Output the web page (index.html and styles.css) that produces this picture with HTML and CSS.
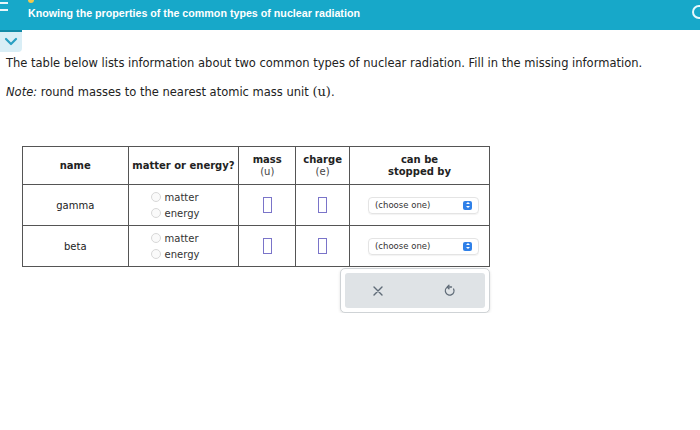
FILE: index.html
```html
<!DOCTYPE html>
<html>
<head>
<meta charset="utf-8">
<link rel="stylesheet" href="styles.css">
</head>
<body>
<header class="topbar">
  <div class="menu"><span></span><span></span></div>
  <div class="dot"></div>
  <div class="title">Knowing the properties of the common types of nuclear radiation</div>
  <div class="ring"></div>
</header>
<div class="tab">
  <svg width="14" height="10" viewBox="0 0 14 10"><path d="M2 2 L7 7 L12 2" fill="none" stroke="#2a9fc2" stroke-width="2.2" stroke-linecap="round" stroke-linejoin="round"/></svg>
</div>
<main class="content">
  <p class="intro">The table below lists information about two common types of nuclear radiation. Fill in the missing information.</p>
  <p class="note"><i>Note:</i> round masses to the nearest atomic mass unit <span class="math">(u)</span>.</p>
  <div class="tablewrap">
    <table class="grid">
      <thead>
        <tr>
          <th class="c-name">name</th>
          <th class="c-me">matter or energy?</th>
          <th class="c-mass">mass<br><span class="unit">(u)</span></th>
          <th class="c-charge">charge<br><span class="unit">(e)</span></th>
          <th class="c-stop">can be<br>stopped by</th>
        </tr>
      </thead>
      <tbody>
        <tr>
          <td>gamma</td>
          <td class="radios">
            <label class="radio"><span class="circ"></span>matter</label>
            <label class="radio"><span class="circ"></span>energy</label>
          </td>
          <td><span class="box"></span></td>
          <td><span class="box"></span></td>
          <td><div class="select"><span>(choose one)</span><span class="arrows"></span></div></td>
        </tr>
        <tr>
          <td>beta</td>
          <td class="radios">
            <label class="radio"><span class="circ"></span>matter</label>
            <label class="radio"><span class="circ"></span>energy</label>
          </td>
          <td><span class="box"></span></td>
          <td><span class="box"></span></td>
          <td><div class="select"><span>(choose one)</span><span class="arrows"></span></div></td>
        </tr>
      </tbody>
    </table>
    <div class="actions">
      <div class="inner">
        <svg width="12" height="12" viewBox="0 0 12 12"><path d="M2 2 L10 10 M10 2 L2 10" stroke="#5f6b77" stroke-width="1.4" stroke-linecap="round"/></svg>
        <svg width="13" height="14" viewBox="0 0 13 14"><path d="M7.5 3 L3.6 3 M3.6 3 A4.3 4.3 0 1 0 9.6 5" fill="none" stroke="#5f6b77" stroke-width="1.3" stroke-linecap="round"/><path d="M5 1.2 L3.3 3 L5 4.8" fill="none" stroke="#5f6b77" stroke-width="1.3" stroke-linecap="round" stroke-linejoin="round"/></svg>
      </div>
    </div>
  </div>
</main>
</body>
</html>
```
FILE: styles.css
```css
* { box-sizing: border-box; }
body {
  margin: 0;
  background: #fff;
  font-family: "DejaVu Sans", Verdana, sans-serif;
  color: #222;
}
.topbar {
  position: relative;
  height: 30px;
  background: #17a8c9;
  display: flex;
  align-items: flex-start;
}
.menu {
  width: 8px;
  padding-top: 2px;
  display: flex;
  flex-direction: column;
  gap: 5px;
}
.menu span {
  display: block;
  height: 2px;
  width: 8px;
  background: #e6f6fa;
}
.dot {
  position: absolute;
  left: 28px;
  top: -3px;
  width: 6px;
  height: 6px;
  border-radius: 50%;
  background: #f2c94c;
}
.title {
  margin-left: 20px;
  margin-top: 7px;
  font-family: "Liberation Sans", Arial, sans-serif;
  font-weight: bold;
  font-size: 10.7px;
  color: #fff;
}
.ring {
  position: absolute;
  right: -6px;
  top: 5px;
  width: 14px;
  height: 14px;
  border: 2px solid #e8f8fc;
  border-radius: 50%;
}
.tab {
  width: 22px;
  height: 22px;
  background: #d9eef6;
  border-radius: 0 0 4px 0;
  border-top: 2px solid #128aa7;
  display: flex;
  align-items: center;
  justify-content: center;
}
.content {
  padding: 0 0 0 6px;
}
.intro {
  margin: 3px 0 0 0;
  font-size: 11.5px;
  line-height: 16px;
  color: #222;
}
.note {
  margin: 13px 0 0 0;
  font-size: 11.5px;
  line-height: 16px;
  color: #222;
}
.math {
  font-family: "DejaVu Serif", serif;
  font-size: 13px;
}
.tablewrap {
  margin: 46px 0 0 16px;
  width: 468px;
}
.grid {
  border-collapse: collapse;
  width: 468px;
  font-size: 10px;
  color: #222;
}
.grid th, .grid td {
  border: 1px solid #555;
  text-align: center;
  vertical-align: middle;
  padding: 0;
}
.grid th {
  height: 38px;
  font-weight: bold;
  line-height: 12px;
}
.grid td { height: 41px; }
.unit { font-weight: normal; color: #444; }
.c-name { width: 106px; }
.c-me { width: 111px; }
.c-mass { width: 57px; }
.c-charge { width: 54px; }
.c-stop { width: 140px; }
.radios { text-align: left !important; padding-left: 22px !important; }
.radio {
  display: flex;
  align-items: center;
  gap: 4px;
  height: 16px;
  color: #333;
}
.circ {
  width: 10px;
  height: 10px;
  border: 1px solid #d8d8d8;
  border-radius: 50%;
  background: #fafafa;
}
.box {
  display: inline-block;
  width: 9px;
  height: 16px;
  border: 1.5px solid #7a74c9;
  vertical-align: middle;
}
.select {
  margin: 0 0 0 18px;
  width: 111px;
  height: 17px;
  border: 1px solid #e4e4e4;
  border-radius: 4px;
  display: flex;
  align-items: center;
  justify-content: space-between;
  padding: 0 6px;
  font-size: 8.5px;
  color: #333;
  box-shadow: 0 1px 1px rgba(0,0,0,0.05);
}
.arrows {
  width: 9px;
  height: 9px;
  background: #2f80e8;
  border-radius: 2px;
  position: relative;
}
.arrows::before, .arrows::after {
  content: "";
  position: absolute;
  left: 2.5px;
  border-left: 2px solid transparent;
  border-right: 2px solid transparent;
}
.arrows::before { top: 1.5px; border-bottom: 2px solid #fff; }
.arrows::after { bottom: 1.5px; border-top: 2px solid #fff; }
.actions {
  margin: 1px 0 0 318px;
  width: 150px;
  height: 45px;
  border: 1px solid #cfd3d6;
  border-radius: 5px;
  padding: 4px;
  background: #fff;
  box-shadow: 0 1px 3px rgba(0,0,0,0.12);
}
.inner {
  height: 100%;
  background: #dfe3e6;
  border-radius: 3px;
  display: flex;
  align-items: center;
  justify-content: space-between;
  padding: 0 28px 0 27px;
}
```
